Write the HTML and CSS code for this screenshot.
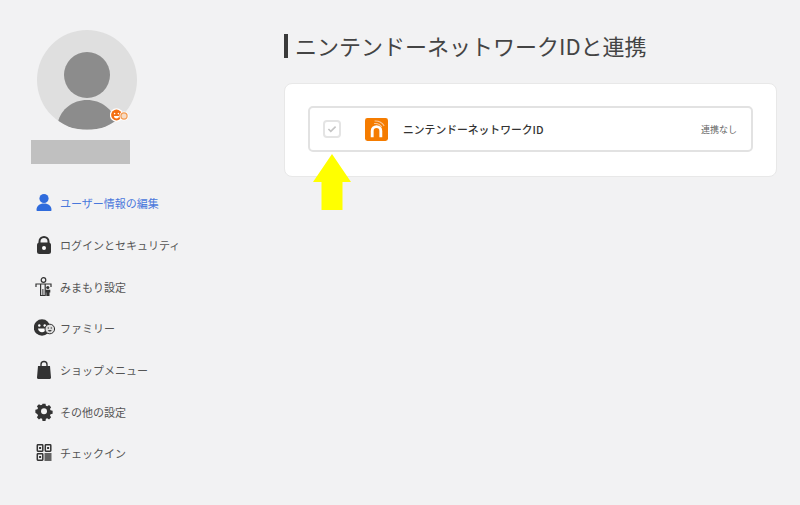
FILE: index.html
```html
<!DOCTYPE html>
<html lang="ja">
<head>
<meta charset="utf-8">
<title>ニンテンドーネットワークIDと連携</title>
<link rel="stylesheet" href="styles.css">
</head>
<body>
<div class="page">
  <aside class="sidebar">
    <div class="avatar">
      <svg class="avatar-art" viewBox="0 0 100 100" width="100" height="100">
        <defs><clipPath id="avatar-clip"><circle cx="50" cy="50" r="50"/></clipPath></defs>
        <circle cx="50" cy="50" r="50" fill="#dfdfdf"/>
        <g clip-path="url(#avatar-clip)">
          <circle cx="50" cy="45" r="23" fill="#8c8c8c"/>
          <path d="M21 92C24 79 36 70 50 70s26 9 29 22C71 102 30 102 21 92z" fill="#8c8c8c"/>
        </g>
      </svg>
      <svg class="avatar-badge" viewBox="0 0 20 14" width="20" height="14">
        <circle cx="6.500" cy="7" r="6.700" fill="#fff"/>
        <circle cx="6.500" cy="7" r="5.400" fill="#f36f12"/>
        <circle cx="4.600" cy="5.600" r=".8" fill="#fff"/>
        <circle cx="8.400" cy="5.600" r=".8" fill="#fff"/>
        <path d="M3.800 8h5.400c-.3 1.700-1.400 2.500-2.700 2.500S4.100 9.700 3.800 8z" fill="#fff"/>
        <circle cx="14" cy="8" r="4.600" fill="#fff"/>
        <circle cx="14" cy="8" r="3.700" fill="#f3994f"/>
        <circle cx="14" cy="8" r="2.500" fill="#f6dcc6"/>
      </svg>
    </div>
    <div class="name-mask"></div>
    <nav class="menu">
      <a class="menu-item is-active">
        <svg class="menu-icon" viewBox="0 0 20 20"><circle cx="10" cy="5.500" r="4.600" fill="#2f6bdc"/><path d="M2.500 17c0-4 3-6.500 7.500-6.500s7.500 2.500 7.500 6.500c0 .6-.4 1-1 1h-13c-.6 0-1-.4-1-1z" fill="#2f6bdc"/></svg>
        <span>ユーザー情報の編集</span>
      </a>
      <a class="menu-item">
        <svg class="menu-icon" viewBox="0 0 20 20"><path d="M5.500 9V6.500a4.500 4.500 0 0 1 9 0V9" fill="none" stroke="#333" stroke-width="2"/><rect x="3" y="7.500" width="14" height="11.500" rx="2.500" fill="#333"/><circle cx="10" cy="13" r="2" fill="#fff"/></svg>
        <span>ログインとセキュリティ</span>
      </a>
      <a class="menu-item">
        <svg class="menu-icon" viewBox="0 0 20 20"><circle cx="9.500" cy="3" r="2.300" fill="none" stroke="#333" stroke-width="1.200"/><path d="M2 10V7H17V10" fill="none" stroke="#333" stroke-width="1.200"/><path d="M6.600 7V18.500H11.200V7" fill="none" stroke="#333" stroke-width="1.200"/><path d="M8.900 12V18.500" stroke="#333" stroke-width="1"/><circle cx="13.800" cy="10.500" r="1.600" fill="#333"/><path d="M11.500 12.700h4.800V15.500h-.8v3.500h-3.200V15.500h-.8z" fill="#333"/></svg>
        <span>みまもり設定</span>
      </a>
      <a class="menu-item">
        <svg class="menu-icon menu-icon-wide" viewBox="0 0 22 20"><circle cx="8" cy="9.500" r="8.200" fill="#333"/><circle cx="5.300" cy="7.500" r="1.200" fill="#fff"/><circle cx="10.700" cy="7.500" r="1.200" fill="#fff"/><path d="M4 10.500h8c-.4 2.500-2 3.700-4 3.700s-3.600-1.200-4-3.700z" fill="#fff"/><circle cx="15.800" cy="11" r="4.800" fill="#dcdcdc" stroke="#333" stroke-width="1"/><circle cx="14.300" cy="10" r=".7" fill="#444"/><circle cx="17.300" cy="10" r=".7" fill="#444"/><path d="M14 12h3.600c-.3 1.200-1 1.600-1.800 1.600s-1.500-.4-1.800-1.600z" fill="#444"/></svg>
        <span>ファミリー</span>
      </a>
      <a class="menu-item">
        <svg class="menu-icon" viewBox="0 0 20 20"><path d="M7 6V4.500a3 3 0 0 1 6 0V6" fill="none" stroke="#333" stroke-width="1.400"/><path d="M4 6h12l1 11.500c.1.700-.4 1.500-1.200 1.500H4.200c-.8 0-1.300-.8-1.200-1.500z" fill="#333"/></svg>
        <span>ショップメニュー</span>
      </a>
      <a class="menu-item">
        <svg class="menu-icon" viewBox="0 0 20 20"><path d="M8.200 1h3.600l.5 2.500 1.600.7 2.200-1.400 2.500 2.500-1.400 2.200.7 1.600 2.500.5v3.600l-2.500.5-.7 1.600 1.400 2.200-2.500 2.500-2.200-1.400-1.600.7-.5 2.500H8.200l-.5-2.500-1.600-.7-2.200 1.400-2.500-2.500 1.400-2.200-.7-1.600L-.4 12V8.400l2.500-.5.700-1.600-1.400-2.200 2.500-2.500 2.200 1.400 1.600-.7z" transform="translate(1.700 .8) scale(.83)" fill="#333"/><circle cx="10" cy="9.300" r="3" fill="#f2f2f2"/></svg>
        <span>その他の設定</span>
      </a>
      <a class="menu-item">
        <svg class="menu-icon" viewBox="0 0 20 20"><g fill="none" stroke="#333" stroke-width="1.500"><rect x="3.300" y="1.800" width="5.500" height="6.400" rx=".6"/><rect x="11.300" y="1.800" width="5.500" height="6.400" rx=".6"/><rect x="3.300" y="10.800" width="5.500" height="6.400" rx=".6"/></g><g fill="#333"><rect x="5.100" y="4" width="2" height="2"/><rect x="13.100" y="4" width="2" height="2"/><rect x="5.100" y="13" width="2" height="2"/><rect x="10.500" y="10" width="7" height="8" opacity=".75"/></g></svg>
        <span>チェックイン</span>
      </a>
    </nav>
  </aside>
  <main class="content">
    <h1 class="page-title">ニンテンドーネットワークIDと連携</h1>
    <section class="card">
      <div class="service-row">
        <span class="checkbox">
          <svg viewBox="0 0 12 10" width="10" height="8"><path d="M1.500 5l3 3 6-6" fill="none" stroke="#c4c4c4" stroke-width="2"/></svg>
        </span>
        <span class="service-logo">
          <svg viewBox="0 0 24 24" width="23" height="23"><rect width="24" height="24" rx="2.500" fill="#f57c00"/><path d="M7.500 20V13.500a4.500 4.500 0 0 1 9 0V20" fill="none" stroke="#fff" stroke-width="3"/><path d="M9.500 5.800a8 8 0 0 1 8 3.700M10 3.200a11 11 0 0 1 10 5" fill="none" stroke="#fbc99a" stroke-width="1.100"/></svg>
        </span>
        <span class="service-name">ニンテンドーネットワークID</span>
        <span class="service-status">連携なし</span>
      </div>
      <svg class="arrow" viewBox="0 0 38 56" width="38" height="56"><path d="M19 0L38 28H29.500V56H8.500V28H0z" fill="#ffff00"/></svg>
    </section>
  </main>
</div>
</body>
</html>
```
FILE: styles.css
```css
html, body {
  margin: 0;
  padding: 0;
  height: 100%;
}
body {
  background: #f2f2f3;
  color: #555;
  font-family: "Noto Sans CJK JP", "Liberation Sans", sans-serif;
  overflow: hidden;
}
.page {
  display: flex;
  height: 505px;
}
.sidebar {
  width: 284px;
  flex: none;
  padding-top: 30px;
  box-sizing: border-box;
}
.avatar {
  position: relative;
  width: 100px;
  height: 100px;
  margin-left: 37px;
}
.avatar-art {
  display: block;
}
.avatar-badge {
  position: absolute;
  left: 73px;
  top: 78px;
}
.name-mask {
  width: 99px;
  height: 24px;
  margin: 10px 0 0 31px;
  background: #c0c0c0;
}
.menu {
  display: flex;
  flex-direction: column;
  margin: 18.500px 0 0 34px;
}
.menu-item {
  display: flex;
  align-items: center;
  height: 41.67px;
  font-size: 11px;
  color: #555;
}
.menu-item.is-active {
  color: #4a78dc;
}
.menu-icon {
  width: 20px;
  height: 20px;
  margin-right: 6px;
  flex: none;
}
.menu-icon-wide {
  width: 22px;
  margin-right: 4px;
}
.content {
  width: 493px;
  padding-top: 34px;
}
.page-title {
  margin: 0;
  height: 24px;
  padding-left: 7px;
  border-left: 4px solid #3a3a3a;
  font-size: 22px;
  font-weight: 400;
  line-height: 23px;
  color: #444;
  white-space: nowrap;
}
.card {
  position: relative;
  margin-top: 25px;
  padding: 22px 23px;
  height: 94px;
  box-sizing: border-box;
  background: #fff;
  border: 1px solid #e8e8e8;
  border-radius: 8px;
}
.service-row {
  display: flex;
  align-items: center;
  height: 46px;
  box-sizing: border-box;
  padding: 0 14px 0 13px;
  border: 2px solid #e2e2e2;
  border-radius: 5px;
  background: #fff;
}
.checkbox {
  display: flex;
  align-items: center;
  justify-content: center;
  width: 18px;
  height: 18px;
  box-sizing: border-box;
  border: 2px solid #e4e4e4;
  border-radius: 4px;
  flex: none;
}
.service-logo {
  display: flex;
  margin-left: 24px;
  flex: none;
}
.service-name {
  margin-left: 15px;
  font-size: 10.800px;
  font-weight: 500;
  color: #333;
  white-space: nowrap;
}
.service-status {
  margin-left: auto;
  font-size: 9px;
  color: #666;
}
.arrow {
  position: absolute;
  left: 28px;
  top: 70px;
}
```
